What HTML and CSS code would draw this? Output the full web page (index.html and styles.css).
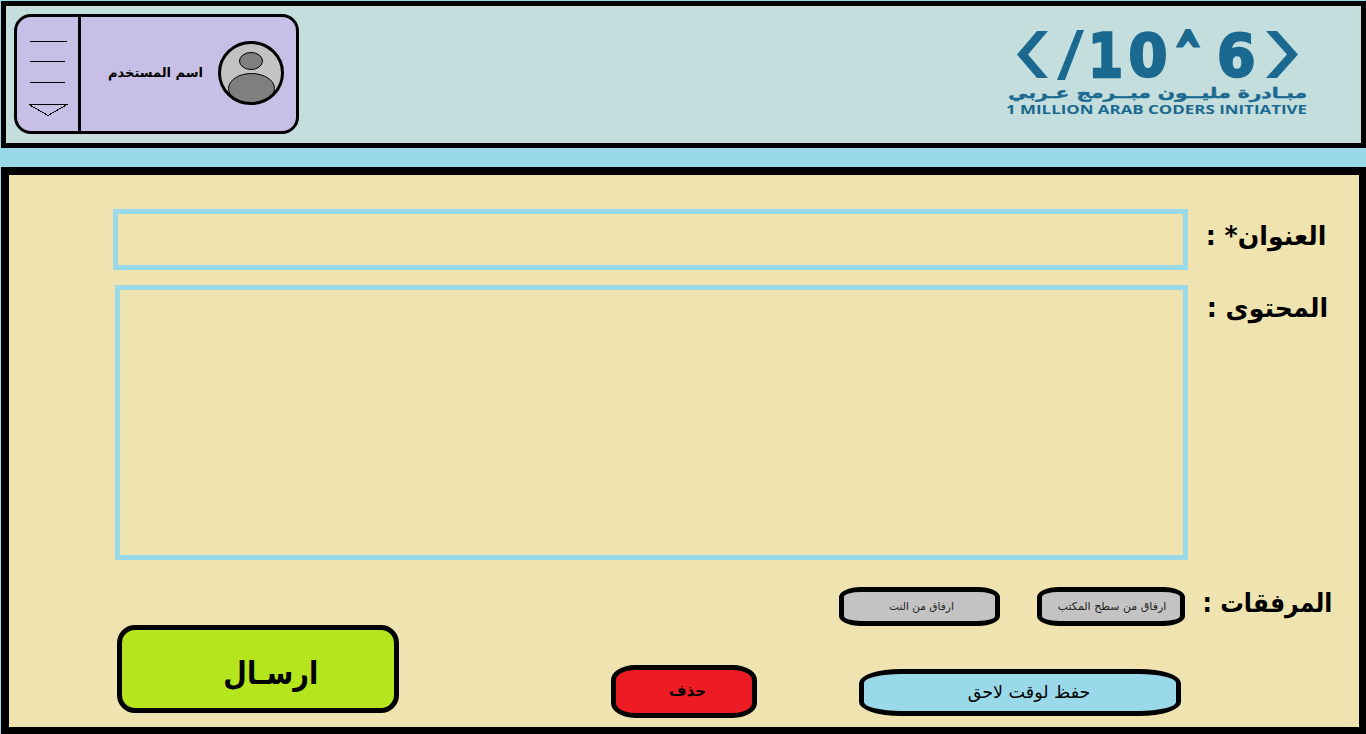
FILE: index.html
```html
<!DOCTYPE html>
<html lang="ar">
<head>
<meta charset="utf-8">
<title>مبادرة مليون مبرمج عربي</title>
<link rel="stylesheet" href="styles.css">
</head>
<body>
<header class="header">
  <div class="user-card">
    <svg class="menu" width="61" height="114" viewBox="17 17 61 114" fill="none" stroke="#000" shape-rendering="crispEdges">
      <path d="M30 41.5H67M30 61.5H65M30 82.5H65M29 104.5H67L48 115.5L29 104.5"/>
    </svg>
    <div class="user">
      <span class="text user-name" dir="rtl">اسم المستخدم</span>
      <svg class="avatar" width="66" height="64" viewBox="218 41 66 64">
        <clipPath id="face"><ellipse cx="251" cy="73" rx="31.5" ry="30.5"/></clipPath>
        <ellipse cx="251" cy="73" rx="31.5" ry="30.5" fill="#c3c3c3"/>
        <g fill="#7f7f7f" stroke="#000" clip-path="url(#face)">
          <ellipse cx="251" cy="61" rx="11.5" ry="8.5"/>
          <ellipse cx="251.500" cy="88.500" rx="23" ry="15"/>
        </g>
        <ellipse cx="251" cy="73" rx="31.500" ry="30.500" fill="none" stroke="#000" stroke-width="3"/>
      </svg>
    </div>
  </div>
  <svg class="logo" width="304" height="137" viewBox="1005 6 304 137">
    <path d="M1037 31H1048L1028 54.500L1048 78H1037L1017 54.500ZM1077 30H1084L1065 80H1057ZM1266 31H1277L1298 54.500L1277 78H1266L1287 54.500Z"/>
    <g class="digits">
      <text transform="translate(1088 77) scale(.83 1)" font-size="61">1</text>
      <text transform="translate(1128.500 76) scale(.94 1)" font-size="59.500">0</text>
      <text class="caret" transform="translate(1176 68) scale(.58 1)" font-size="49">^</text>
      <text transform="translate(1217 76) scale(.93 1)" font-size="59.500">6</text>
    </g>
    <text class="logo-ar" direction="rtl" x="1307" y="98" textLength="299" lengthAdjust="spacingAndGlyphs">مبـادرة مليــون مبــرمج عـربي</text>
    <text class="logo-en" x="1006" y="114" textLength="301" lengthAdjust="spacingAndGlyphs">1 MILLION ARAB CODERS INITIATIVE</text>
  </svg>
</header>
<main class="panel">
  <div class="field title-field">
    <div class="input"></div>
    <div class="label" dir="rtl"><span class="text">العنوان* :</span></div>
  </div>
  <div class="field content-field">
    <div class="input"></div>
    <div class="label" dir="rtl"><span class="text">المحتوى :</span></div>
  </div>
  <div class="bottom">
    <button class="btn send"><span class="text" dir="rtl">ارسـال</span></button>
    <div class="side">
      <div class="attachments">
        <button class="btn net"><span class="text" dir="rtl">ارفاق من النت</span></button>
        <button class="btn desk"><span class="text" dir="rtl">ارفاق من سطح المكتب</span></button>
        <div class="label" dir="rtl"><span class="text">المرفقات :</span></div>
      </div>
      <div class="actions">
        <button class="btn delete"><span class="text" dir="rtl">حذف</span></button>
        <button class="btn save"><span class="text" dir="rtl">حفظ لوقت لاحق</span></button>
      </div>
    </div>
  </div>
</main>
</body>
</html>
```
FILE: styles.css
```css
* { box-sizing: border-box; }
html { overflow: hidden; }
body {
  margin: 0;
  padding: 1px 0 0 1px;
  height: 734px;
  overflow: hidden;
  background: #9ad9ea;
  color: #000;
  font-family: "DejaVu Sans", sans-serif;
}
.text { display: inline-block; white-space: nowrap; flex: none; }
.header {
  display: flex;
  justify-content: space-between;
  height: 147px;
  border: 5px solid #000;
  background: #c3dedc;
  padding: 0 52px 0 8px;
}
.user-card {
  display: flex;
  width: 285px;
  height: 120px;
  margin-top: 8px;
  border: 3px solid #000;
  border-radius: 17px;
  background: #c8bfe7;
}
.menu { display: block; flex: none; }
.user {
  display: flex;
  flex: 1;
  align-items: center;
  justify-content: flex-end;
  gap: 15px;
  padding: 0 12px 2px 0;
  border-left: 3px solid #000;
}
.user-name { margin-bottom: 2px; font-size: 13px; font-weight: bold; }
.avatar { display: block; flex: none; }
.logo { display: block; fill: #1b6990; }
.digits { font-weight: bold; stroke: #1b6990; stroke-width: 2.5px; }
.caret { stroke-width: 5px; }
.logo-ar { font: bold 15px "DejaVu Sans", sans-serif; stroke: #1b6990; stroke-width: 0.4px; }
.logo-en { font: bold 11.5px "Open Sans", sans-serif; }
.panel {
  margin-top: 19px;
  height: 567px;
  border: solid #000;
  border-width: 8px 7px 7px 8px;
  background: #efe3af;
  padding-top: 34px;
}
.field { display: flex; }
.input { border: 5px solid #9ad9ea; flex: none; }
.title-field .input { width: 1075px; height: 61px; margin-left: 104px; }
.content-field { margin-top: 15px; }
.content-field .input { width: 1073px; height: 275px; margin-left: 106px; }
.label { flex: 1; font-size: 26px; font-weight: bold; line-height: 32px; }
.label .text { transform-origin: right center; transform: scaleX(0.97); }
.title-field .label { padding: 11px 33px 0 0; }
.content-field .label { padding: 7px 31px 0 0; }
.bottom { display: flex; margin-top: 27px; }
.btn {
  display: flex;
  align-items: center;
  justify-content: center;
  flex: none;
  margin: 0;
  padding: 0;
  border: 5px solid #000;
  color: #000;
  font-family: inherit;
}
.send {
  width: 282px;
  height: 88px;
  margin: 38px 0 0 108px;
  padding: 8px 0 0 25px;
  border-radius: 18px;
  background: #b5e61d;
  font-size: 32px;
  font-weight: bold;
}
.send .text { transform: scaleX(0.85); }
.side { flex: 1; }
.attachments { display: flex; padding-left: 440px; }
.net, .desk {
  height: 39px;
  border-radius: 22px / 10px;
  background: #c3c3c3;
  color: #222;
}
.net { width: 161px; padding: 0 0 2px 4px; font-size: 10.6px; }
.desk { width: 148px; margin-left: 37px; padding-left: 2px; font-size: 11px; }
.attachments .label { padding: 0 27px 0 0; }
.attachments .label .text { transform: scaleX(0.905); }
.actions { display: flex; padding-left: 212px; margin-top: 39px; }
.delete {
  width: 146px;
  height: 53px;
  padding: 0 0 2px 7px;
  border-radius: 24px / 15px;
  background: #ed1c24;
  font-size: 15px;
  font-weight: bold;
}
.save {
  width: 322px;
  height: 47px;
  margin: 4px 0 0 102px;
  padding: 0 0 2px 18px;
  border-radius: 42px / 14px;
  background: #9ad9ea;
  font-size: 17.5px;
}
```
